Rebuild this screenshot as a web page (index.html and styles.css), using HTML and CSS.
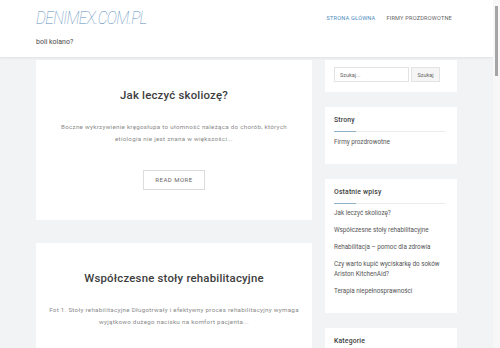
FILE: index.html
```html
<!DOCTYPE html>
<html lang="pl">
<head>
    <meta charset="UTF-8">
    <meta name="viewport" content="width=device-width, initial-scale=1.0">
    <title>denimex.com.pl</title>
    <link rel="stylesheet" href="styles.css">
</head>
<body>
    <header class="site-header">
        <div class="wrap header-row">
            <div class="branding">
                <a class="logo" href="#">DENIMEX.COM.PL</a>
                <p class="tagline">boli kolano?</p>
            </div>
            <nav class="menu">
                <a class="current" href="#">Strona główna</a>
                <a href="#">Firmy prozdrowotne</a>
            </nav>
        </div>
    </header>

    <div class="wrap content">
        <main class="posts">
            <article class="post">
                <h2>Jak leczyć skoliozę?</h2>
                <p>Boczne wykrzywienie kręgosłupa to ułomność należąca do chorób, których etiologia nie jest znana w większości...</p>
                <a class="more" href="#">Read more</a>
            </article>
            <article class="post">
                <h2>Współczesne stoły rehabilitacyjne</h2>
                <p>Fot 1. Stoły rehabilitacyjne Długotrwały i efektywny proces rehabilitacyjny wymaga wyjątkowo dużego nacisku na komfort pacjenta...</p>
                <a class="more" href="#">Read more</a>
            </article>
            <article class="post">
                <h2>Rehabilitacja – pomoc dla zdrowia</h2>
                <p>Rehabilitacja jest procesem, który pozwala wrócić do pełnej sprawności po urazach i chorobach...</p>
                <a class="more" href="#">Read more</a>
            </article>
            <article class="post">
                <h2>Czy warto kupić wyciskarkę do soków Ariston KitchenAid?</h2>
                <p>Zdrowe odżywianie to podstawa dobrego samopoczucia, a świeże soki są jego ważną częścią...</p>
                <a class="more" href="#">Read more</a>
            </article>
            <article class="post">
                <h2>Terapia niepełnosprawności</h2>
                <p>Osoby niepełnosprawne potrzebują wsparcia specjalistów oraz odpowiednio dobranej terapii...</p>
                <a class="more" href="#">Read more</a>
            </article>
        </main>

        <aside class="sidebar">
            <section class="widget search">
                <input type="text" placeholder="Szukaj...">
                <button>Szukaj</button>
            </section>
            <section class="widget">
                <h3>Strony</h3>
                <ul>
                    <li><a href="#">Firmy prozdrowotne</a></li>
                </ul>
            </section>
            <section class="widget">
                <h3>Ostatnie wpisy</h3>
                <ul>
                    <li><a href="#">Jak leczyć skoliozę?</a></li>
                    <li><a href="#">Współczesne stoły rehabilitacyjne</a></li>
                    <li><a href="#">Rehabilitacja – pomoc dla zdrowia</a></li>
                    <li><a href="#">Czy warto kupić wyciskarkę do soków Ariston KitchenAid?</a></li>
                    <li><a href="#">Terapia niepełnosprawności</a></li>
                </ul>
            </section>
            <section class="widget">
                <h3>Kategorie</h3>
                <ul>
                    <li><a href="#">Zdrowie</a></li>
                </ul>
            </section>
        </aside>
    </div>

    <div class="scrollbar"><div class="thumb"></div></div>
</body>
</html>
```

FILE: styles.css
```css
body {
    margin: 0;
    padding-right: 7px;
    font-family: Roboto, "Liberation Sans", sans-serif;
    background-color: #f2f3f5;
    color: #555;
}
a {
    text-decoration: none;
    color: inherit;
}
.wrap {
    width: 421px;
    margin: 0 auto;
}

/* fake window scrollbar, the reference was taken with one */
.scrollbar {
    position: fixed;
    top: 0;
    right: 0;
    width: 7px;
    height: 100%;
    background: #f7f7f7;
}
.scrollbar .thumb {
    position: absolute;
    top: 6px;
    left: 2px;
    width: 3px;
    height: 70px;
    background: #a5a5a5;
}

.site-header {
    background: #fff;
    height: 57px;
    border-bottom: 1px solid #e6e7e9;
    box-shadow: 0 1px 2px rgba(0, 0, 0, 0.04);
}
.header-row {
    display: flex;
    justify-content: space-between;
    align-items: flex-start;
}
.logo {
    display: block;
    margin-top: 8px;
    font-size: 19px;
    font-weight: 100;
    font-style: italic;
    letter-spacing: -0.8px;
    color: #5b8dba;
    line-height: 20px;
    transform: scaleX(0.82);
    transform-origin: left center;
}
.tagline {
    margin: 10px 0 0;
    font-size: 7px;
    color: #4a4a4a;
}
.menu {
    display: flex;
    gap: 11px;
    margin-top: 15px;
    margin-right: 5px;
}
.menu a {
    font-size: 5.6px;
    text-transform: uppercase;
    letter-spacing: 0.2px;
    color: #666;
}
.menu a.current {
    color: #4c8dc0;
}
.content {
    display: flex;
    gap: 13px;
    align-items: flex-start;
    padding-top: 2px;
}
.posts {
    width: 276px;
    display: flex;
    flex-direction: column;
    gap: 23px;
}
.post {
    background: #fff;
    text-align: center;
    padding: 27px 11.5px 30px;
}
.post h2 {
    margin: 0;
    font-size: 11.4px;
    line-height: 16px;
    font-weight: 500;
    color: #3d3d3d;
    letter-spacing: 0.2px;
}
.post p {
    margin: 18px 0 0;
    font-size: 6.2px;
    line-height: 12px;
    color: #8a8a8a;
    letter-spacing: 0.3px;
}
.more {
    display: inline-block;
    margin-top: 25px;
    width: 60px;
    height: 18px;
    line-height: 18px;
    border: 1px solid #dcdcdc;
    font-size: 6px;
    text-transform: uppercase;
    letter-spacing: 0.5px;
    color: #666;
}
.sidebar {
    width: 132px;
    display: flex;
    flex-direction: column;
    gap: 15px;
}
.widget {
    background: #fff;
    padding: 8px 11px 10px 9px;
}
.widget.search {
    display: flex;
    gap: 2px;
    padding: 7px 17px 10px 9px;
}
.search input {
    width: 75px;
    height: 15px;
    box-sizing: border-box;
    border: 1px solid #e3e3e3;
    padding: 0 5px;
    font-family: inherit;
    font-size: 5.5px;
    color: #555;
}
.search input::placeholder {
    color: #666;
}
.search button {
    width: 29px;
    height: 15px;
    border: 1px solid #e3e3e3;
    background: #f5f5f5;
    font-family: inherit;
    font-size: 5.5px;
    color: #666;
    padding: 0;
}
.widget h3 {
    margin: 0;
    padding: 1px 0 6px;
    font-size: 6.8px;
    line-height: 9px;
    font-weight: 500;
    color: #3d3d3d;
    letter-spacing: 0.2px;
    border-bottom: 1px solid #ececec;
    position: relative;
}
.widget h3::after {
    content: "";
    position: absolute;
    left: 0;
    bottom: -1px;
    width: 22px;
    height: 1px;
    background: #8fb2c9;
}
.widget ul {
    list-style: none;
    margin: 0;
    padding: 4.5px 0 0;
}
.widget li {
    font-size: 6.3px;
    line-height: 10px;
    color: #555;
    margin-bottom: 7px;
}
```
